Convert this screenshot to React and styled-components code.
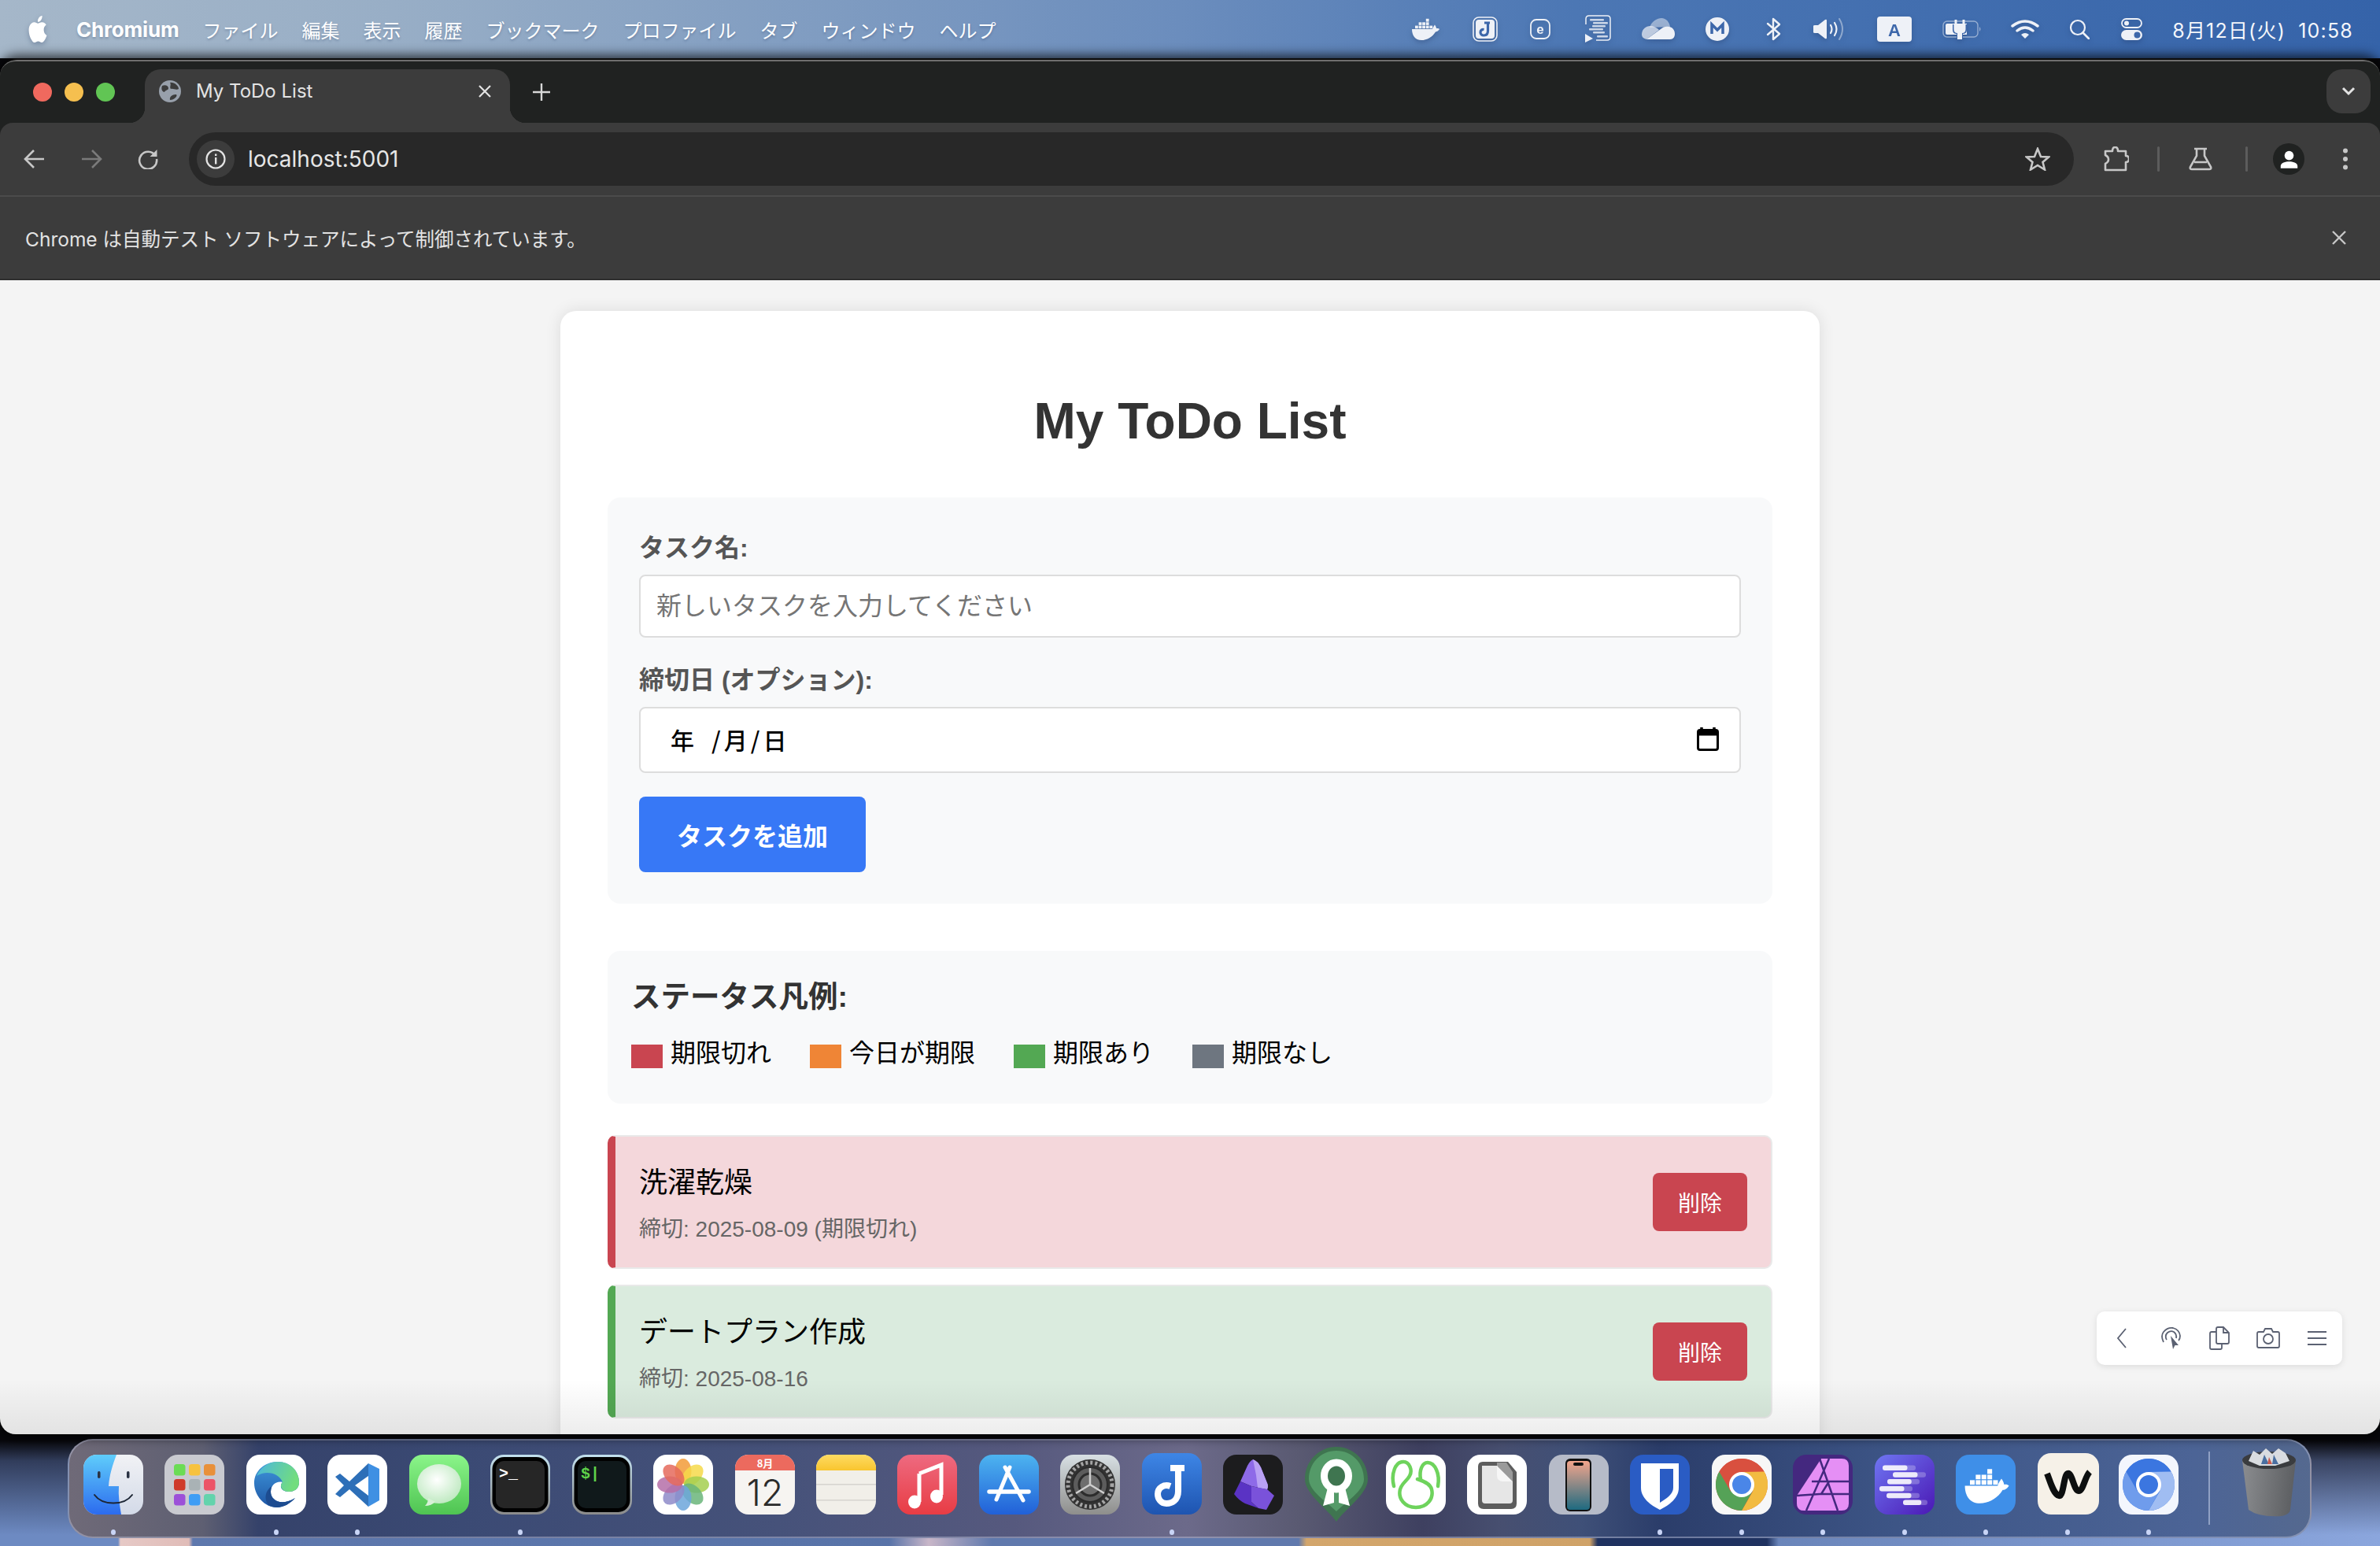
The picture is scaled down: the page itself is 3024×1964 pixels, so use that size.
import React from 'react'
import styled, { createGlobalStyle } from 'styled-components'

const pageFont = `"Liberation Sans", "Noto Sans CJK JP", sans-serif`
const uiFont = `Inter, "Noto Sans CJK JP", sans-serif`

const GlobalStyle = createGlobalStyle`
  html, body { margin: 0; padding: 0; width: 3024px; height: 1964px; overflow: hidden; }
  * { box-sizing: border-box; }
`

/* ---------- whale shared by the menu bar and the dock ---------- */
const Whale = ({ fill = '#fff' }) => (
  <g fill={fill}>
    <path d="M1 14H27C28 11 29 10 30 8.5C31.500 10.500 32 12 32 13C34 12.800 35 13 36 14C34 17 32 17.400 31 17.400C27 24 20 28 13 28C5 28 1 22 1 14Z" />
    {[5, 9.6, 14.2, 18.8, 23.400].map(x => <rect key={x} x={x} y="9.600" width="3.800" height="3.600" />)}
    {[9.6, 14.2, 18.8].map(x => <rect key={x} x={x} y="5.300" width="3.800" height="3.600" />)}
    <rect x="18.8" y="0.8" width="3.800" height="3.800" />
  </g>
)

/* ---------- menu bar status icons ---------- */
const Tint = '#eef1f7'
const Blue = '#3d67aa'

const StatusDocker = () => (
  <svg width="36" height="28" viewBox="0 0 36 28"><Whale fill={Tint} /></svg>
)
const StatusJoplin = () => (
  <svg width="32" height="32" viewBox="0 0 32 32">
    <rect x="1" y="1" width="30" height="30" rx="7" fill="none" stroke={Tint} strokeWidth="1.600" />
    <rect x="4" y="4" width="24" height="24" rx="4" fill={Tint} />
    <path d="M15 8H22M19.500 8V18C19.500 22 17.500 24 14.500 24C11.500 24 10 22 10 20C10 17.500 12 16 14.500 16.500" fill="none" stroke={Blue} strokeWidth="3.200" />
  </svg>
)
const StatusEdit = () => (
  <svg width="26" height="26" viewBox="0 0 26 26">
    <rect x="1" y="1" width="24" height="24" rx="7" fill="none" stroke={Tint} strokeWidth="1.800" />
    <text x="13" y="19" textAnchor="middle" fontFamily="Liberation Sans" fontWeight="700" fontSize="17" fill={Tint}>e</text>
  </svg>
)
const StatusCode = () => (
  <svg width="36" height="36" viewBox="0 0 36 36">
    <path d="M2 12V5Q2 1 6 1H29Q33 1 33 5V28Q33 32 29 32H15" fill="none" stroke={Tint} strokeWidth="1.500" />
    <path d="M1 24L11 30L1 35Z" fill={Tint} />
    {[[7, 5, 18], [11, 9, 19], [10, 13, 17], [6, 17, 18], [11, 21, 15], [16, 26, 14]].map(([x, y, w]) => (
      <rect key={y} x={x} y={y} width={w} height="2.500" rx="1" fill={Tint} opacity=".8" />
    ))}
  </svg>
)
const StatusCloud = () => (
  <svg width="42" height="28" viewBox="0 0 42 28">
    <path d="M10 12C12 4 20 0 25 0C31 0 35 5 36 11Z" fill={Tint} opacity=".5" />
    <path d="M0 21C0 14 5 10 11 10C15 10 19 12 22 15L6 27C2 26 0 24 0 21Z" fill={Tint} opacity=".72" />
    <path d="M6 27L24 14C27 11 31 10 35 11C40 12 42 16 42 20C42 24 40 27 36 27Z" fill={Tint} />
  </svg>
)
const StatusMega = () => (
  <svg width="30" height="30" viewBox="0 0 30 30">
    <circle cx="15" cy="15" r="15" fill={Tint} />
    <path d="M8 21V9L15 16L22 9V21" fill="none" stroke={Blue} strokeWidth="3.500" />
  </svg>
)
const StatusBluetooth = () => (
  <svg width="20" height="30" viewBox="0 0 20 30">
    <path d="M2 8L17 21L9 28V2L17 9L2 22" fill="none" stroke={Tint} strokeWidth="2.400" strokeLinecap="round" strokeLinejoin="round" />
  </svg>
)
const StatusVolume = () => (
  <svg width="40" height="28" viewBox="0 0 40 28">
    <path d="M0 10Q0 9 2 9H6L15 2Q17 1 17 3V25Q17 27 15 26L6 19H2Q0 19 0 18Z" fill={Tint} />
    <path d="M22 9Q25 14 22 19M27 6Q32 14 27 22" fill="none" stroke={Tint} strokeWidth="2.200" strokeLinecap="round" />
    <path d="M33 1Q41 14 33 27" fill="none" stroke={Tint} strokeWidth="2" strokeLinecap="round" opacity=".45" />
  </svg>
)
const StatusKeyboard = () => (
  <svg width="44" height="32" viewBox="0 0 44 32">
    <rect width="44" height="32" rx="4" fill={Tint} />
    <text x="22" y="25" textAnchor="middle" fontFamily="Liberation Sans" fontWeight="700" fontSize="22" fill={Blue}>A</text>
  </svg>
)
const StatusBattery = () => (
  <svg width="50" height="26" viewBox="0 0 50 26">
    <rect x="1" y="3" width="44" height="20" rx="5" fill="none" stroke={Tint} strokeWidth="1.400" opacity=".5" />
    <path d="M47 10Q50 13 47 16Z" fill={Tint} opacity=".5" />
    <path d="M4 8Q4 6 6 6H31V20H6Q4 20 4 18Z" fill={Tint} />
    <path d="M13 7H31V14Q31 19 26 19V25H18V19Q13 19 13 14Z" fill={Blue} />
    <path d="M17 1V7M27 1V7" stroke={Tint} strokeWidth="3" />
    <path d="M14.500 7H29.500V13Q29.500 18 25 18V26H19V18Q14.500 18 14.500 13Z" fill={Tint} />
  </svg>
)
const StatusWifi = () => (
  <svg width="36" height="26" viewBox="0 0 36 26">
    <path d="M2 9Q18 -3 34 9M8 15Q18 7 28 15" fill="none" stroke={Tint} strokeWidth="3.500" strokeLinecap="round" />
    <path d="M13 20Q18 16 23 20L18 25Z" fill={Tint} />
  </svg>
)
const StatusSearch = () => (
  <svg width="26" height="26" viewBox="0 0 26 26">
    <circle cx="11" cy="11" r="9" fill="none" stroke={Tint} strokeWidth="2.200" />
    <path d="M17.500 17.500L25 25" stroke={Tint} strokeWidth="2.600" strokeLinecap="round" />
  </svg>
)
const StatusToggles = () => (
  <svg width="28" height="28" viewBox="0 0 28 28">
    <rect x="1" y="1" width="25" height="11" rx="5.500" fill="none" stroke={Tint} strokeWidth="1.800" />
    <circle cx="7" cy="6.500" r="3" fill={Tint} />
    <rect x="0" y="15" width="27" height="13" rx="6.500" fill={Tint} />
    <circle cx="20.500" cy="21.500" r="4" fill={Blue} />
  </svg>
)

/* ---------- dock icons, all drawn on a 76 unit square ---------- */
const Grad = ({ id, from, to, x2 = 0, y2 = 1 }) => (
  <linearGradient id={id} x1="0" y1="0" x2={x2} y2={y2}>
    <stop offset="0" stopColor={from} />
    <stop offset="1" stopColor={to} />
  </linearGradient>
)
const Tile = ({ fill }) => <rect width="76" height="76" rx="17" fill={fill} />

const Finder = () => (
  <>
    <defs>
      <Grad id="fb" from="#5fcdfb" to="#2c6bee" />
      <Grad id="fw" from="#f1f2f5" to="#d3dae8" />
      <clipPath id="fc"><rect width="76" height="76" rx="17" /></clipPath>
    </defs>
    <g clipPath="url(#fc)">
      <rect width="76" height="76" fill="url(#fw)" />
      <path d="M0 0H42C37 13 33 26 32 40H45C44 52 46 64 48 76H0Z" fill="url(#fb)" />
    </g>
    <rect x="18" y="21" width="3.500" height="9" rx="1.700" fill="#2a3343" />
    <rect x="55" y="21" width="3.500" height="9" rx="1.700" fill="#2a3343" />
    <path d="M14 51C24 65 52 65 62 51" fill="none" stroke="#1d2635" strokeWidth="2" strokeLinecap="round" />
  </>
)
const Launchpad = () => {
  const cells = ['#6bdc55', '#f7c23f', '#e8903a', '#cf3a2b', '#a9b2b5', '#ec5468', '#9c50d8', '#3f9df5', '#63d3ac']
  return (
    <>
      <Tile fill="#c9cad0" />
      {cells.map((c, i) => (
        <rect key={c} x={12 + (i % 3) * 19} y={12 + Math.floor(i / 3) * 19} width="14.500" height="14.500" rx="3.500" fill={c} />
      ))}
    </>
  )
}
const Edge = () => (
  <>
    <defs>
      <Grad id="eb" from="#3f97dc" to="#1f57a5" />
      <Grad id="eg" from="#4ab6e0" to="#72dd7e" x2="1" y2="0.300" />
    </defs>
    <Tile fill="#fff" />
    <path d="M10 36C10 20 24 9 40 9C56 9 67 21 67 35C67 44 60 47 54 47C48 47 43 44 44 39C44 37 45 36 46 35C38 33 31 39 31 47C31 58 44 66 62 55C56 62 47 67 39 67C23 67 10 52 10 36Z" fill="url(#eb)" />
    <path d="M13 27C18 16 28 9 40 9C56 9 67 21 67 35C67 44 60 47 54 47C48 47 44 44 44 39C44 37 45 36 46 35C42 24 26 19 13 27Z" fill="url(#eg)" />
    <path d="M31 47C31 58 44 66 62 55C56 62 47 67 39 67C35 67 31 66 28 64C22 56 24 46 32 40Z" fill="#1d4c90" />
  </>
)
const VSCode = () => (
  <>
    <Tile fill="#fff" />
    <path d="M52 11L66 18V58L52 66Z" fill="#3f90e3" />
    <path d="M52 11V27L35 39L52 52V66L28 44L16 54L10 50L21 39L10 28L16 24L28 34Z" fill="#2d6fb8" />
  </>
)
const Messages = () => (
  <>
    <defs>
      <Grad id="mg" from="#8bf58a" to="#4fc452" />
      <radialGradient id="mb" cx=".45" cy=".4" r=".7">
        <stop offset="0" stopColor="#fff" />
        <stop offset="1" stopColor="#b6e6b8" />
      </radialGradient>
    </defs>
    <Tile fill="url(#mg)" />
    <ellipse cx="38" cy="37" rx="28" ry="25" fill="url(#mb)" />
    <path d="M24 55C24 60 22 63 20 65C25 65 30 63 33 60Z" fill="#d7f1d7" />
  </>
)
const Terminal = ({ panel, color, mark }) => (
  <>
    <defs><Grad id="tf" from="#c2e0ee" to="#8b8b8b" /></defs>
    <rect width="76" height="76" rx="17" fill="url(#tf)" />
    <rect x="2.500" y="3" width="71" height="70" rx="15" fill="#000" />
    <rect x="7" y="8" width="62" height="60" rx="10" fill={panel} />
    <text x="11" y="30" fontFamily="Liberation Mono" fontWeight="700" fontSize="20" fill={color}>{mark}</text>
  </>
)
const Photos = () => {
  const petals = ['#f29b37', '#f6d94a', '#a5cf4f', '#6ab57a', '#6ca6db', '#8e8bc9', '#b56fa8', '#e56a5c']
  return (
    <>
      <Tile fill="#fff" />
      {petals.map((c, i) => (
        <ellipse key={c} cx="38" cy="21" rx="10.500" ry="16" fill={c} opacity=".85" transform={`rotate(${i * 45} 38 38)`} />
      ))}
    </>
  )
}
const Calendar = () => (
  <>
    <defs><clipPath id="cc"><rect width="76" height="76" rx="17" /></clipPath></defs>
    <Tile fill="#f6f4f1" />
    <g clipPath="url(#cc)"><rect width="76" height="20" fill="#ec6a5e" /></g>
    <text x="38" y="15.500" textAnchor="middle" fontFamily="Noto Sans CJK JP" fontWeight="700" fontSize="13" fill="#fff">8月</text>
    <text x="38" y="65" textAnchor="middle" fontFamily="Inter" fontWeight="300" fontSize="46" fill="#2b2b2b">12</text>
  </>
)
const Notes = () => (
  <>
    <defs>
      <clipPath id="nc"><rect width="76" height="76" rx="17" /></clipPath>
      <Grad id="ny" from="#fedb62" to="#f9c52f" />
    </defs>
    <Tile fill="#f1efe9" />
    <g clipPath="url(#nc)">
      <rect width="76" height="20" fill="url(#ny)" />
      <rect y="37" width="76" height="1.500" fill="#d6d4cf" />
      <rect y="57" width="76" height="1.500" fill="#d6d4cf" />
    </g>
  </>
)
const Music = () => (
  <>
    <defs><Grad id="mu" from="#ee6a80" to="#e83c44" /></defs>
    <Tile fill="url(#mu)" />
    <path d="M28 24L56 13V51M28 24V60" fill="none" stroke="#fff" strokeWidth="5" />
    <ellipse cx="22" cy="60" rx="8" ry="8.500" fill="#fff" />
    <ellipse cx="50" cy="53" rx="8" ry="8.500" fill="#fff" />
  </>
)
const AppStore = () => (
  <>
    <defs><Grad id="as" from="#4db4f0" to="#2160d8" /></defs>
    <Tile fill="url(#as)" />
    <path d="M33 16L56 58M39 16L22 57" fill="none" stroke="#fff" strokeWidth="5" strokeLinecap="round" />
    <path d="M13 47H63" stroke="#fff" strokeWidth="5.500" strokeLinecap="round" />
  </>
)
const Settings = () => (
  <>
    <defs><Grad id="st" from="#d8e0e4" to="#8e8e8c" /></defs>
    <Tile fill="url(#st)" />
    <circle cx="38" cy="38" r="32" fill="#333" />
    <circle cx="38" cy="38" r="28" fill="none" stroke="#a5a5a5" strokeWidth="5" strokeDasharray="3 3" />
    <circle cx="38" cy="38" r="22" fill="#5c5c5c" stroke="#2c2c2c" strokeWidth="2" />
    <circle cx="38" cy="38" r="14" fill="#6e6e6e" stroke="#2c2c2c" strokeWidth="3" />
    <path d="M38 38V17M38 38L56 49M38 38L20 49" stroke="#cfcfcf" strokeWidth="2.500" />
  </>
)
const Joplin = () => (
  <>
    <defs><Grad id="jo" from="#3e86e6" to="#1e54b0" /></defs>
    <rect y="-2" width="76" height="78" rx="17" fill="url(#jo)" />
    <path d="M36 17H54M46 17V46C46 58 38 62 31 62C24 62 20 56 20 50C20 42 28 37 36 40" fill="none" stroke="#fff" strokeWidth="8" />
  </>
)
const Obsidian = () => (
  <>
    <Tile fill="#1c1c1e" />
    <path d="M38 6Q44 8 48 16L56 36Q58 40 56 44L36 40L22 34L31 14Q34 8 38 6Z" fill="#8e6ae8" />
    <path d="M38 6Q44 8 48 16L56 36Q58 40 56 44L44 42L42 26Z" fill="#b9a1f4" />
    <path d="M22 34L36 40L36 60L45 68L28 62Q20 58 14 50Z" fill="#5a33c4" />
    <path d="M36 40L56 44L65 52L55 70L45 68L36 60Z" fill="#7a52da" />
  </>
)
const OpenVPN = () => (
  <>
    <path d="M40 -10C62 -10 80 8 80 31C80 50 50 70 40 85C30 70 0 50 0 31C0 8 18 -10 40 -10Z" fill="#3f7550" />
    <path d="M40 -5C60 -5 75 11 75 31C75 46 52 60 40 72C28 60 5 46 5 31C5 11 20 -5 40 -5Z" fill="#549a68" />
    <ellipse cx="40" cy="27" rx="15.500" ry="17" fill="#3f7550" stroke="#fff" strokeWidth="9" />
    <path d="M29 42L23 65L37 61L37 46ZM51 42L57 65L43 61L43 46Z" fill="#fff" />
  </>
)
const Navicat = () => (
  <>
    <Tile fill="#fff" />
    <path d="M10 40C6 24 12 9 22 9C30 9 34 20 30 27C27 33 20 36 18 44C15 56 24 67 38 67C52 67 61 56 58 44C56 36 46 33 40 31" fill="none" stroke="#6ed35c" strokeWidth="4.500" strokeLinecap="round" />
    <path d="M66 40C69 24 62 10 53 10C46 10 42 20 44 31" fill="none" stroke="#6ed35c" strokeWidth="4.500" strokeLinecap="round" />
  </>
)
const LibreOffice = () => (
  <>
    <Tile fill="#fff" />
    <path d="M20 9H52L63 22V62Q63 69 56 69H21Q14 69 14 62V15Q14 9 20 9Z" fill="#5d5d5d" />
    <path d="M19 14H39V28L58 34V58Q58 62 54 62H23Q19 62 19 58Z" fill="#e6e6e6" />
    <path d="M38 14L58 34V22L50 10H38Z" fill="#9a9a9a" />
    <path d="M38 14V26Q38 34 46 34H58Z" fill="#f6f6f6" />
  </>
)
const PhoneMirror = () => (
  <>
    <defs><Grad id="ph" from="#f3a58c" to="#1e6a80" /></defs>
    <Tile fill="#b6bbc8" />
    <rect x="21" y="5" width="33" height="67" rx="6" fill="#111" />
    <rect x="23" y="8" width="29" height="62" rx="4" fill="url(#ph)" />
    <rect x="31" y="10" width="13" height="4" rx="2" fill="#111" />
  </>
)
const Bitwarden = () => (
  <>
    <Tile fill="#2a5cc4" />
    <path d="M14 11H62V42C62 55 50 64 38 70C26 64 14 55 14 42Z" fill="#fff" />
    <path d="M38 18H55V42C55 50 46 56 38 61Z" fill="#2a5cc4" />
  </>
)
const ChromeMark = ({ top, right, left, core, bg }) => {
  const wedge = 'M9.400 21.500A33 33 0 0 1 66.600 21.500H38L24 46Z'
  return (
    <>
      <Tile fill={bg} />
      <circle cx="38" cy="38" r="33" fill={top} />
      <path d={wedge} fill={top} />
      <path d={wedge} fill={right} transform="rotate(120 38 38)" />
      <path d={wedge} fill={left} transform="rotate(240 38 38)" />
      <circle cx="38" cy="38" r="16" fill="#fff" />
      <circle cx="38" cy="38" r="12" fill={core} />
    </>
  )
}
const Affinity = () => (
  <>
    <Tile fill="#44287f" />
    <path d="M36 5H62Q71 5 71 14V62Q71 71 62 71H14Q5 71 5 62V52Z" fill="#e58ff5" />
    <path d="M17 71L46 5M34 5L57 71M24 34H71M5 52L34 50H71M36 50L46 34" fill="none" stroke="#44287f" strokeWidth="2.500" />
  </>
)
const BarsApp = () => {
  const rows = [[10, 52], [23, 65], [16, 57], [6, 48], [15, 57], [36, 67]]
  return (
    <>
      <defs><Grad id="ba" from="#6f76f2" to="#4a18b4" x2="1" y2="1" /></defs>
      <Tile fill="url(#ba)" />
      {rows.map(([a, b], i) => (
        <g key={a}>
          <rect x={a} y={13.500 + i * 8.800} width={b - a} height="6.500" rx="3" fill="#fff" opacity=".25" />
          <rect x={a} y={13.500 + i * 8.800} width={(b - a) * 0.75} height="6.500" rx="3" fill="#fff" opacity=".85" />
        </g>
      ))}
    </>
  )
}
const DockerTile = () => (
  <>
    <Tile fill="#3f8fe8" />
    <g transform="translate(10 17) scale(1.600)"><Whale /></g>
  </>
)
const WaveTile = () => (
  <>
    <rect y="-2" width="78" height="78" rx="17" fill="#f6f1e8" />
    <path d="M12 24C16 34 20 50 27 52C33 54 33 26 38 24C44 22 46 46 52 46C58 46 60 28 66 22" fill="none" stroke="#0d0f0f" strokeWidth="8" />
  </>
)
const Trash = () => (
  <>
    <defs><Grad id="tr" from="#8b8d90" to="#5d5f62" x2="1" y2="0.100" /></defs>
    <path d="M0 15L8 78Q22 88 50 86Q60 84 61 78L68 15Z" fill="url(#tr)" />
    <ellipse cx="34" cy="15" rx="34" ry="11" fill="#3a3c3f" />
    <path d="M8 16L14 3L22 8L30 0L38 7L46 0L55 6L60 16L42 22L22 22Z" fill="#d9dce0" />
    <path d="M28 8L34 20L24 20ZM40 8L46 20L38 20Z" fill="#4a6fa0" />
    <path d="M34 11L38 20L32 20Z" fill="#c95a4f" />
  </>
)

const dockItems = [
  { name: 'Finder', icon: <Finder />, on: true },
  { name: 'Launchpad', icon: <Launchpad /> },
  { name: 'Edge', icon: <Edge />, on: true },
  { name: 'VS Code', icon: <VSCode />, on: true },
  { name: 'Messages', icon: <Messages /> },
  { name: 'Terminal', icon: <Terminal panel="#262626" color="#fff" mark=">_" />, on: true },
  { name: 'iTerm', icon: <Terminal panel="#10191b" color="#5fd34a" mark="$|" /> },
  { name: 'Photos', icon: <Photos /> },
  { name: 'Calendar', icon: <Calendar /> },
  { name: 'Notes', icon: <Notes /> },
  { name: 'Music', icon: <Music /> },
  { name: 'App Store', icon: <AppStore /> },
  { name: 'Settings', icon: <Settings /> },
  { name: 'Joplin', icon: <Joplin />, on: true },
  { name: 'Obsidian', icon: <Obsidian /> },
  { name: 'OpenVPN', icon: <OpenVPN /> },
  { name: 'Navicat', icon: <Navicat /> },
  { name: 'LibreOffice', icon: <LibreOffice /> },
  { name: 'iPhone', icon: <PhoneMirror /> },
  { name: 'Bitwarden', icon: <Bitwarden />, on: true },
  { name: 'Chrome', icon: <ChromeMark bg="#f7f7f7" top="#d9503f" right="#f2bb41" left="#55a257" core="#4a86e8" />, on: true },
  { name: 'Affinity', icon: <Affinity />, on: true },
  { name: 'Bars', icon: <BarsApp />, on: true },
  { name: 'Docker', icon: <DockerTile />, on: true },
  { name: 'Wave', icon: <WaveTile />, on: true },
  { name: 'Chromium', icon: <ChromeMark bg="#f3f6fd" top="#3b76e0" right="#a0bdf2" left="#6f9cec" core="#3b76e0" />, on: true },
]

const menuItems = ['ファイル', '編集', '表示', '履歴', 'ブックマーク', 'プロファイル', 'タブ', 'ウィンドウ', 'ヘルプ']
const statusIcons = [
  [76, <StatusDocker />], [76, <StatusJoplin />], [64, <StatusEdit />], [84, <StatusCode />],
  [68, <StatusCloud />], [82, <StatusMega />], [62, <StatusBluetooth />], [78, <StatusVolume />],
  [88, <StatusKeyboard />], [84, <StatusBattery />], [76, <StatusWifi />], [62, <StatusSearch />], [72, <StatusToggles />],
]
const legend = [
  ['#c94550', '期限切れ'],
  ['#ef8536', '今日が期限'],
  ['#53a853', '期限あり'],
  ['#6e7680', '期限なし'],
]
const tasks = [
  { title: '洗濯乾燥', due: '締切: 2025-08-09 (期限切れ)', accent: '#c94550', tint: '#f4d7db' },
  { title: 'デートプラン作成', due: '締切: 2025-08-16', accent: '#53a853', tint: '#daebde' },
]

export default function App() {
  return (
    <Desktop>
      <GlobalStyle />
      <MenuBar>
        <MenuLeft>
          <svg width="28" height="34" viewBox="0 0 24 24" preserveAspectRatio="none" fill="#fff">
            <path d="M12.152 6.896c-.948 0-2.415-1.078-3.96-1.04-2.04.027-3.91 1.183-4.961 3.014-2.117 3.675-.546 9.103 1.519 12.09 1.013 1.454 2.208 3.09 3.792 3.039 1.52-.065 2.09-.987 3.935-.987 1.831 0 2.35.987 3.96.948 1.637-.026 2.676-1.48 3.676-2.948 1.156-1.688 1.636-3.325 1.662-3.415-.039-.013-3.182-1.221-3.22-4.857-.026-3.04 2.48-4.494 2.597-4.559-1.429-2.09-3.623-2.324-4.39-2.376-2-.156-3.675 1.09-4.61 1.09zM15.53 3.83c.843-1.012 1.4-2.427 1.245-3.83-1.207.052-2.662.805-3.532 1.818-.78.896-1.454 2.338-1.273 3.714 1.338.104 2.715-.688 3.559-1.701" />
          </svg>
          <AppName>Chromium</AppName>
          {menuItems.map(m => <MenuItem key={m}>{m}</MenuItem>)}
        </MenuLeft>
        <MenuRight>
          {statusIcons.map(([w, icon], i) => <StatusSlot key={i} $w={w}>{icon}</StatusSlot>)}
          <Clock>8月12日(火) 10:58</Clock>
        </MenuRight>
      </MenuBar>

      <BrowserWindow>
        <TabStrip>
          <Lights>
            <Light $c="#f0695e" />
            <Light $c="#f5bf4f" />
            <Light $c="#61c554" />
          </Lights>
          <Tab>
            <svg width="28" height="28" viewBox="0 0 28 28">
              <circle cx="14" cy="14" r="14" fill="#98a0ab" />
              <path d="M4 7C8 5 12 7 12 10C12 13 8 12 7 15C5 15 2 12 4 7ZM14 3C19 2 25 7 25 11C22 13 18 10 15 11C13 8 16 6 14 3ZM14 25C13 21 17 18 21 18C23 18 23 20 21 22C19 24 17 25 14 25Z" fill="#3c3c3c" />
            </svg>
            <TabTitle>My ToDo List</TabTitle>
            <TabClose>
              <svg width="18" height="18" viewBox="0 0 18 18"><path d="M2 2L16 16M16 2L2 16" stroke="#e3e3e3" strokeWidth="2.200" /></svg>
            </TabClose>
          </Tab>
          <NewTab>
            <svg width="24" height="24" viewBox="0 0 24 24"><path d="M12 1V23M1 12H23" stroke="#d8d8d8" strokeWidth="2.400" /></svg>
          </NewTab>
          <TabSearch>
            <svg width="18" height="12" viewBox="0 0 18 12"><path d="M2 2L9 9L16 2" fill="none" stroke="#e3e3e3" strokeWidth="3" /></svg>
          </TabSearch>
        </TabStrip>

        <Toolbar>
          <NavButton>
            <svg width="28" height="26" viewBox="0 0 28 26"><path d="M13 2L2 13L13 24M2 13H26" fill="none" stroke="#c7c7c7" strokeWidth="2.600" /></svg>
          </NavButton>
          <NavButton>
            <svg width="28" height="26" viewBox="0 0 28 26"><path d="M15 2L26 13L15 24M26 13H2" fill="none" stroke="#7a7a7a" strokeWidth="2.600" /></svg>
          </NavButton>
          <NavButton>
            <svg width="26" height="26" viewBox="0 0 26 26">
              <path d="M22.500 9A11 11 0 1 0 24 13" fill="none" stroke="#c7c7c7" strokeWidth="2.600" />
              <path d="M24.500 1V10H15.500Z" fill="#c7c7c7" />
            </svg>
          </NavButton>
          <AddressBar>
            <InfoPill>
              <svg width="26" height="26" viewBox="0 0 26 26">
                <circle cx="13" cy="13" r="11.500" fill="none" stroke="#e3e3e3" strokeWidth="2.200" />
                <rect x="12" y="11" width="2.400" height="8.500" fill="#e3e3e3" />
                <rect x="12" y="6.500" width="2.400" height="2.600" fill="#e3e3e3" />
              </svg>
            </InfoPill>
            <Url>localhost:5001</Url>
            <Star>
              <svg width="32" height="30" viewBox="0 0 32 30"><path d="M16 2L20 12L30 12.500L22.500 19L25 28.500L16 23L7 28.500L9.500 19L2 12.500L12 12Z" fill="none" stroke="#c7c7c7" strokeWidth="2.600" strokeLinejoin="miter" /></svg>
            </Star>
          </AddressBar>
          <ToolActions>
            <ToolSlot $w={104}>
              <svg width="32" height="32" viewBox="0 0 32 32">
                <path d="M2 6H11Q11 1 14.500 1Q18 1 18 6H28V12Q32 12 32 16Q32 20 28 20V30H2V22Q6 20 6 16.500Q6 13 2 11Z" fill="none" stroke="#c7c7c7" strokeWidth="2.600" strokeLinejoin="round" />
              </svg>
            </ToolSlot>
            <ToolDivider />
            <ToolSlot $w={104}>
              <svg width="30" height="30" viewBox="0 0 30 30">
                <path d="M7 2H23M10 2V11L2 25Q1 28 4 28H26Q29 28 28 25L20 11V2" fill="none" stroke="#c7c7c7" strokeWidth="2.600" />
                <path d="M7 19H23" stroke="#c7c7c7" strokeWidth="2.600" />
              </svg>
            </ToolSlot>
            <ToolDivider $gap={5} />
            <ToolSlot $w={104}>
              <Avatar>
                <svg width="28" height="26" viewBox="0 0 28 26">
                  <circle cx="14" cy="7" r="6.500" fill="#fff" />
                  <path d="M2 25V22C2 17 9 15.500 14 15.500C19 15.500 26 17 26 22V25Z" fill="#fff" />
                </svg>
              </Avatar>
            </ToolSlot>
            <ToolSlot $w={40}>
              <svg width="8" height="28" viewBox="0 0 8 28" fill="#c7c7c7">
                <circle cx="4" cy="3.500" r="3" /><circle cx="4" cy="14" r="3" /><circle cx="4" cy="24.500" r="3" />
              </svg>
            </ToolSlot>
          </ToolActions>
        </Toolbar>

        <InfoBar>
          <InfoText>Chrome は自動テスト ソフトウェアによって制御されています。</InfoText>
          <svg width="20" height="20" viewBox="0 0 20 20"><path d="M2 2L18 18M18 2L2 18" stroke="#c7c7c7" strokeWidth="2.400" /></svg>
        </InfoBar>

        <Viewport>
          <Card>
            <Title>My ToDo List</Title>
            <FormBox>
              <Field>
                <Label>タスク名:</Label>
                <TextInput placeholder="新しいタスクを入力してください" readOnly />
              </Field>
              <Field>
                <Label>締切日 (オプション):</Label>
                <DateField>
                  <DateYear>年</DateYear>
                  <DateSlash>/</DateSlash>
                  <span>月</span>
                  <DateSlash>/</DateSlash>
                  <span>日</span>
                  <CalendarGlyph>
                    <svg width="28" height="30" viewBox="0 0 28 30">
                      <path d="M6 0V4M22 0V4" stroke="#000" strokeWidth="3.500" />
                      <rect x="1.500" y="3.500" width="25" height="25" rx="2.500" fill="none" stroke="#000" strokeWidth="3" />
                      <rect x="1.500" y="3.500" width="25" height="7" fill="#000" />
                    </svg>
                  </CalendarGlyph>
                </DateField>
              </Field>
              <AddButton type="button">タスクを追加</AddButton>
            </FormBox>

            <LegendBox>
              <LegendTitle>ステータス凡例:</LegendTitle>
              <LegendRow>
                {legend.map(([c, t]) => (
                  <LegendItem key={t}>
                    <Swatch $c={c} />
                    <span>{t}</span>
                  </LegendItem>
                ))}
              </LegendRow>
            </LegendBox>

            <TaskList>
              {tasks.map(t => (
                <Task key={t.title} $accent={t.accent} $tint={t.tint}>
                  <div>
                    <TaskName>{t.title}</TaskName>
                    <TaskDue>{t.due}</TaskDue>
                  </div>
                  <DeleteButton type="button">削除</DeleteButton>
                </Task>
              ))}
            </TaskList>
          </Card>

          <BottomShade />

          <FloatBar>
            <FloatSlot>
              <svg width="16" height="28" viewBox="0 0 16 28"><path d="M13 2L3 14L13 26" fill="none" stroke="#5b6172" strokeWidth="1.800" /></svg>
            </FloatSlot>
            <FloatSlot>
              <svg width="28" height="30" viewBox="0 0 28 30" fill="none" stroke="#5b6172" strokeWidth="1.800">
                <path d="M5 20Q1 12 5 7Q10 1 17 2Q25 4 26 12Q26 16 24 18" />
                <path d="M9 17Q6 12 10 8Q14 5 18 7Q22 10 21 15" />
                <path d="M14 12L17 29L19.500 24L24 24Z" fill="#5b6172" stroke="none" />
              </svg>
            </FloatSlot>
            <FloatSlot>
              <svg width="26" height="30" viewBox="0 0 26 30" fill="none" stroke="#5b6172" strokeWidth="1.800">
                <path d="M9 7H3Q1 7 1 9V27Q1 29 3 29H14Q16 29 16 27V22" />
                <path d="M9 3Q9 1 11 1H18L25 8V20Q25 22 23 22H11Q9 22 9 20Z" />
                <path d="M18 1V8H25" />
              </svg>
            </FloatSlot>
            <FloatSlot>
              <svg width="30" height="26" viewBox="0 0 30 26" fill="none" stroke="#5b6172" strokeWidth="1.800">
                <path d="M3 5H9L11 1H19L21 5H27Q29 5 29 7V23Q29 25 27 25H3Q1 25 1 23V7Q1 5 3 5Z" />
                <circle cx="15" cy="14" r="6" />
              </svg>
            </FloatSlot>
            <FloatSlot>
              <svg width="26" height="20" viewBox="0 0 26 20"><path d="M1 2H25M1 10H25M1 18H25" stroke="#5b6172" strokeWidth="2" /></svg>
            </FloatSlot>
          </FloatBar>
        </Viewport>
      </BrowserWindow>

      <Dock>
        {dockItems.map(d => (
          <DockItem key={d.name}>
            <DockSvg viewBox="0 0 76 76">{d.icon}</DockSvg>
            <DockDot $on={d.on} />
          </DockItem>
        ))}
        <DockDivider />
        <TrashSvg viewBox="0 0 68 88"><Trash /></TrashSvg>
      </Dock>
    </Desktop>
  )
}

const Desktop = styled.div`
  width: 3024px;
  height: 1964px;
  overflow: hidden;
  display: flex;
  flex-direction: column;
  background:
    linear-gradient(to bottom, #08080c 0, #08080c 1830px, rgba(24, 28, 48, .7) 1856px, rgba(40, 50, 85, 0) 1950px),
    linear-gradient(to right,
      #6d8ac2 0, #6d8ac2 150px, #e6c9c6 153px, #e0bcb8 240px, #5e78ad 245px, #5873a8 1130px,
      #c8b6c8 1180px, #6079ad 1260px, #6079ad 1650px, #d3a66c 1660px, #cfa268 2020px,
      #1f3260 2030px, #1f3260 2245px, #6a85ba 2260px, #8ba6dd 3024px);
`

const MenuBar = styled.header`
  height: 74px;
  flex-shrink: 0;
  display: flex;
  align-items: center;
  justify-content: space-between;
  padding: 0 34px;
  color: #fff;
  font-family: ${uiFont};
  background: linear-gradient(to right, #a5b7c9 0, #98aec6 500px, #6b8dbd 1500px, #4c77b4 2000px, #3563a9 3024px);
  svg { filter: drop-shadow(0 3px 3px rgba(20, 40, 80, .28)); }
`

const MenuLeft = styled.div`
  display: flex;
  align-items: center;
  gap: 30px;
`

const AppName = styled.span`
  font-weight: 700;
  font-size: 26px;
  margin-left: 5px;
  letter-spacing: -.2px;
  text-shadow: 0 2px 3px rgba(20, 40, 80, .25);
`

const MenuItem = styled.span`
  font-size: 24px;
  text-shadow: 0 2px 3px rgba(20, 40, 80, .25);
`

const MenuRight = styled.div`
  display: flex;
  align-items: center;
`

const StatusSlot = styled.div`
  width: ${p => p.$w}px;
  display: flex;
  justify-content: center;
  align-items: center;
`

const Clock = styled.span`
  margin-left: 15px;
  font-size: 25px;
  letter-spacing: 1.200px;
  word-spacing: 8px;
  color: #f5f7fb;
  white-space: nowrap;
`

const BrowserWindow = styled.div`
  height: 1748px;
  flex-shrink: 0;
  display: flex;
  flex-direction: column;
  overflow: hidden;
  position: relative;
  border-top: 2px solid #0c0c0c;
  border-radius: 22px 22px 20px 20px;
  background: #202221;
  box-shadow: 0 0 14px 4px rgba(0, 0, 0, .7);
  font-family: ${uiFont};
`

const TabStrip = styled.div`
  height: 80px;
  flex-shrink: 0;
  display: flex;
  align-items: flex-start;
  padding-top: 10px;
  border-top: 2px solid #6f6f6f;
  border-radius: 20px 20px 0 0;
  background: #202221;
`

const Lights = styled.div`
  display: flex;
  gap: 16px;
  margin: 17px 0 0 42px;
`

const Light = styled.span`
  width: 24px;
  height: 24px;
  border-radius: 50%;
  background: ${p => p.$c};
`

const Tab = styled.div`
  position: relative;
  width: 464px;
  height: 68px;
  margin-left: 38px;
  padding: 14px 0 0 18px;
  display: flex;
  align-items: flex-start;
  border-radius: 20px 20px 0 0;
  background: #3c3c3c;
  &::before, &::after {
    content: '';
    position: absolute;
    bottom: 0;
    width: 20px;
    height: 20px;
  }
  &::before {
    left: -20px;
    background: radial-gradient(circle at 0 0, #202221 20px, #3c3c3c 20.500px);
  }
  &::after {
    right: -20px;
    background: radial-gradient(circle at 100% 0, #202221 20px, #3c3c3c 20.500px);
  }
`

const TabTitle = styled.span`
  margin-left: 19px;
  font-size: 24px;
  line-height: 28px;
  color: #e3e3e3;
  flex: 1;
`

const TabClose = styled.span`
  width: 18px;
  height: 18px;
  margin: 5px 23px 0 0;
  display: flex;
`

const NewTab = styled.span`
  margin: 17px 0 0 28px;
  display: flex;
`

const TabSearch = styled.span`
  width: 56px;
  height: 56px;
  margin: 0 12px 0 auto;
  display: flex;
  align-items: center;
  justify-content: center;
  border-radius: 20px;
  background: #3c3c3c;
`

const Toolbar = styled.div`
  height: 94px;
  flex-shrink: 0;
  display: flex;
  align-items: flex-start;
  padding: 12px 0 0 8px;
  border-radius: 16px 16px 0 0;
  border-bottom: 2px solid #4b4b4b;
  background: #3c3c3c;
`

const NavButton = styled.span`
  width: 72px;
  height: 68px;
  display: flex;
  align-items: center;
  justify-content: center;
`

const AddressBar = styled.div`
  width: 2395px;
  height: 68px;
  margin-left: 16px;
  padding: 0 10px;
  display: flex;
  align-items: center;
  border-radius: 34px;
  background: #282828;
`

const InfoPill = styled.span`
  width: 48px;
  height: 48px;
  display: flex;
  align-items: center;
  justify-content: center;
  border-radius: 50%;
  background: #3c3c3c;
`

const Url = styled.span`
  margin-left: 17px;
  flex: 1;
  font-size: 28px;
  color: #e6e6e6;
`

const Star = styled.span`
  display: flex;
  margin-right: 20px;
`

const ToolActions = styled.div`
  height: 68px;
  display: flex;
  align-items: center;
  margin-left: 2px;
`

const ToolSlot = styled.span`
  width: ${p => p.$w}px;
  display: flex;
  justify-content: center;
  align-items: center;
`

const ToolDivider = styled.span`
  width: 3px;
  height: 32px;
  margin-left: ${p => p.$gap || 0}px;
  background: #5c5c5c;
  border-radius: 2px;
`

const Avatar = styled.span`
  width: 40px;
  height: 40px;
  display: flex;
  align-items: flex-end;
  justify-content: center;
  padding-bottom: 7px;
  border-radius: 50%;
  background: #202221;
  svg { width: 25px; height: 24px; }
`

const InfoBar = styled.div`
  height: 106px;
  flex-shrink: 0;
  padding: 0 42px 0 32px;
  display: flex;
  align-items: center;
  justify-content: space-between;
  background: #3c3c3c;
  border-bottom: 2px solid #2f2f2f;
`

const InfoText = styled.span`
  font-size: 24.500px;
  color: #e3e3e3;
`

const Viewport = styled.main`
  flex: 1;
  min-height: 0;
  position: relative;
  overflow: hidden;
  padding-top: 39px;
  background: #f4f4f4;
  font-family: ${pageFont};
`

const Card = styled.section`
  width: 1600px;
  margin: 0 auto;
  padding: 60px 60px 60px;
  border-radius: 20px;
  background: #fff;
  box-shadow: 0 0 20px rgba(0, 0, 0, .1);
`

const Title = styled.h1`
  margin: 43px 0 60px;
  font-size: 64px;
  line-height: 74px;
  font-weight: 700;
  text-align: center;
  color: #333;
`

const FormBox = styled.form`
  padding: 40px;
  margin-bottom: 60px;
  border-radius: 16px;
  background: #f8f9fa;
`

const Field = styled.div`
  margin-bottom: 30px;
`

const Label = styled.label`
  display: block;
  margin-bottom: 10px;
  font-size: 32px;
  line-height: 48px;
  font-weight: 700;
  color: #555;
`

const TextInput = styled.input`
  display: block;
  width: 100%;
  height: 80px;
  padding: 0 20px;
  border: 2px solid #ddd;
  border-radius: 8px;
  background: #fff;
  font-family: ${pageFont};
  font-size: 32px;
  outline: none;
  &::placeholder { color: #757575; }
`

const DateField = styled.div`
  height: 84px;
  padding: 0 26px 2px 38px;
  display: flex;
  align-items: center;
  border: 2px solid #ddd;
  border-radius: 8px;
  background: #fff;
  font-family: "Noto Sans CJK JP", sans-serif;
  font-size: 30px;
  font-weight: 500;
  color: #000;
`

const DateYear = styled.span`
  margin-right: 18px;
`

const DateSlash = styled.span`
  margin: 0 4px;
`

const CalendarGlyph = styled.span`
  margin-left: auto;
  display: flex;
`

const AddButton = styled.button`
  width: 288px;
  height: 96px;
  padding: 0;
  border: none;
  border-radius: 8px;
  background: #3778f6;
  color: #fff;
  font-family: ${pageFont};
  font-size: 32px;
  font-weight: 700;
`

const LegendBox = styled.section`
  padding: 30px 30px 40px;
  margin-bottom: 40px;
  border-radius: 16px;
  background: #f8f9fa;
`

const LegendTitle = styled.h3`
  margin: 0 0 20px;
  font-size: 37.500px;
  line-height: 56px;
  font-weight: 700;
  color: #333;
`

const LegendRow = styled.div`
  display: flex;
  gap: 49px;
`

const LegendItem = styled.div`
  display: flex;
  align-items: flex-start;
  gap: 10px;
  font-size: 32px;
  line-height: 48px;
  color: #000;
`

const Swatch = styled.span`
  width: 40px;
  height: 30px;
  margin-top: 13px;
  background: ${p => p.$c};
`

const TaskList = styled.div`
  display: flex;
  flex-direction: column;
  gap: 20px;
`

const Task = styled.article`
  display: flex;
  align-items: center;
  justify-content: space-between;
  padding: 30px;
  border: 2px solid #e9e9e9;
  border-left: 10px solid ${p => p.$accent};
  border-radius: 10px;
  background: ${p => p.$tint};
`

const TaskName = styled.div`
  font-size: 36px;
  line-height: 58px;
  color: #000;
`

const TaskDue = styled.div`
  margin-top: 11px;
  font-size: 28px;
  line-height: 37px;
  color: #666;
`

const DeleteButton = styled.button`
  width: 120px;
  height: 74px;
  padding: 0;
  border: none;
  border-radius: 8px;
  background: #c94550;
  color: #fff;
  font-family: ${pageFont};
  font-size: 28px;
`

const BottomShade = styled.div`
  position: absolute;
  left: 0;
  right: 0;
  bottom: 0;
  height: 70px;
  pointer-events: none;
  background: linear-gradient(to bottom, rgba(0, 0, 0, 0), rgba(0, 0, 0, .07));
`

const FloatBar = styled.div`
  position: absolute;
  top: 1310px;
  left: 2664px;
  width: 312px;
  height: 68px;
  padding: 0 0 0 1px;
  display: flex;
  align-items: center;
  border-radius: 10px;
  background: #fff;
  box-shadow: 0 2px 8px rgba(0, 0, 0, .1);
`

const FloatSlot = styled.span`
  width: 62px;
  display: flex;
  justify-content: center;
`

const Dock = styled.footer`
  width: 2851px;
  height: 126px;
  margin: 6px 0 0 86px;
  padding: 18px 0 0 18px;
  flex-shrink: 0;
  display: flex;
  align-items: flex-start;
  gap: 27.440px;
  border: 2px solid rgba(190, 196, 220, .45);
  border-radius: 32px;
  background: linear-gradient(to right,
    #6f6a78 0, #5e5f72 170px, #35426a 240px, #3b4a74 500px, #46527a 900px, #56597e 1200px,
    #6c6a8a 1420px, #5a5a72 1560px, #3e4060 1720px, #474f70 1820px, #3f5078 1920px,
    #2b3d6a 2020px, #3d5586 2320px, #4c6496 2700px, #55698f 2851px);
`

const DockItem = styled.div`
  width: 76px;
  display: flex;
  flex-direction: column;
  align-items: center;
`

const DockSvg = styled.svg`
  width: 76px;
  height: 76px;
  overflow: visible;
  display: block;
`

const DockDot = styled.span`
  width: 6px;
  height: 7px;
  margin-top: 19px;
  border-radius: 50%;
  background: ${p => (p.$on ? '#c9d5f6' : 'transparent')};
`

const DockDivider = styled.span`
  width: 2px;
  height: 93px;
  margin: -4px 0 0 11px;
  background: rgba(200, 212, 235, .55);
`

const TrashSvg = styled.svg`
  width: 68px;
  height: 88px;
  margin: -8px 0 0 13px;
  overflow: visible;
`
